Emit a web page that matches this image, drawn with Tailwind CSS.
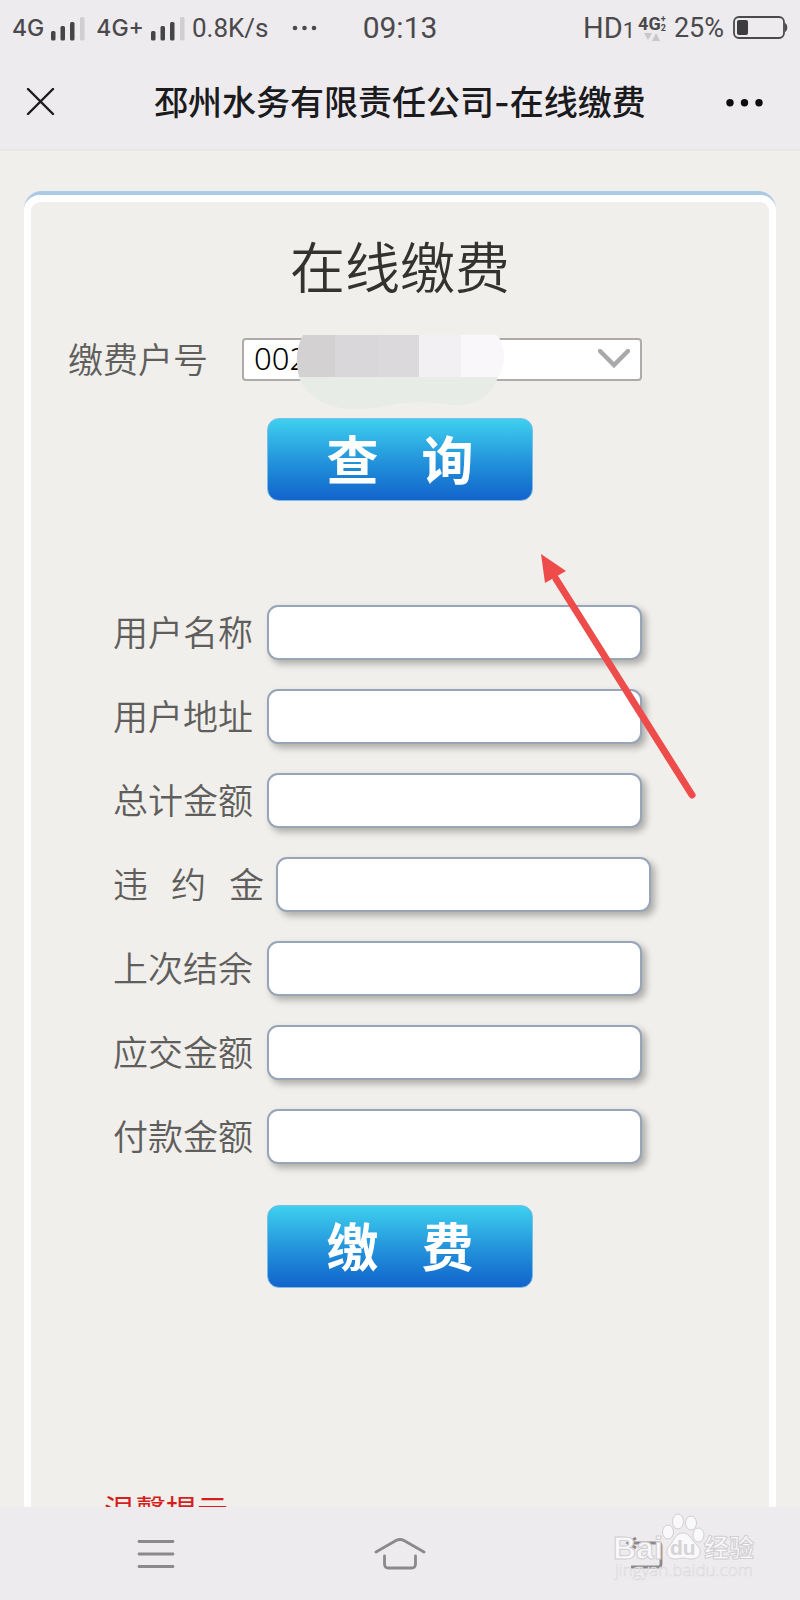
<!DOCTYPE html>
<html lang="zh-CN">
<head>
<meta charset="utf-8">
<meta name="viewport" content="width=device-width, initial-scale=1">
<title>邳州水务有限责任公司-在线缴费</title>
<script src="https://cdn.jsdelivr.net/npm/@tailwindcss/browser@4"></script>
</head>
<body class="relative flex h-screen flex-col overflow-hidden bg-[#f0efeb] font-['Noto_Sans_CJK_SC',sans-serif] font-[350] text-[#5f5e5c]">

<header class="shrink-0 border-b-2 border-[#e8e6e6] bg-[#edebee]">
  <div class="grid h-[56px] grid-cols-[1fr_auto_1fr] items-center px-[12px] font-[Roboto,sans-serif] text-[26px] leading-none font-normal text-[#4a494c]">
    <div class="flex items-center">
      <span class="font-[Inter,sans-serif] text-[23px] font-medium">4G</span>
      <svg class="ml-[7px] shrink-0" width="34" height="25" viewBox="0 0 34 25"><g fill="#454447"><rect x="0" y="15" width="4.500" height="9.500" rx="1.500"/><rect x="9.500" y="10" width="4.500" height="14.500" rx="1.500"/><rect x="19" y="6" width="4.500" height="18.500" rx="1.500"/></g><rect x="29" y="1" width="4.500" height="23.500" rx="1.500" fill="#d0ced1"/></svg>
      <span class="ml-[11px] font-[Inter,sans-serif] text-[23px] font-medium">4G+</span>
      <svg class="ml-[7px] shrink-0" width="34" height="25" viewBox="0 0 34 25"><g fill="#454447"><rect x="0" y="15" width="4.500" height="9.500" rx="1.500"/><rect x="9.500" y="10" width="4.500" height="14.500" rx="1.500"/><rect x="19" y="6" width="4.500" height="18.500" rx="1.500"/></g><rect x="29" y="1" width="4.500" height="23.500" rx="1.500" fill="#d0ced1"/></svg>
      <span class="ml-[7px]">0.8K/s</span>
      <svg class="ml-6 shrink-0" width="25" height="6" viewBox="0 0 25 6" fill="#4a494c"><circle cx="3" cy="3" r="2.300"/><circle cx="12.500" cy="3" r="2.300"/><circle cx="22" cy="3" r="2.300"/></svg>
    </div>
    <time class="text-[30px]">09:13</time>
    <div class="flex items-center justify-end">
      <span class="text-[29px]">HD<span class="text-[22px]">1</span></span>
      <span class="ml-[3px] flex flex-col items-center">
        <span class="flex text-[18px] leading-[18px] font-bold">4G<span class="flex flex-col text-[9px] leading-[9px]"><span>+</span><span>2</span></span></span>
        <svg width="16" height="8" viewBox="0 0 16 8" fill="#c9c7ca"><path d="M0 0h8L4 7zM8 8h8l-4-8z"/></svg>
      </span>
      <span class="ml-2 text-[27px]">25%</span>
      <svg class="ml-[9px] shrink-0" width="55" height="24" viewBox="0 0 55 24"><rect x="1" y="1" width="50" height="21" rx="5" fill="none" stroke="#4a494c" stroke-width="1.800"/><rect x="4" y="4" width="11" height="15" rx="2" fill="#3d3d3d"/><path d="M52 7c3 1 3 8 0 9z" fill="#4a494c"/></svg>
    </div>
  </div>
  <div class="grid h-[93px] grid-cols-[1fr_auto_1fr] items-center px-[26px] text-[#1b1a1c]">
    <button type="button" aria-label="关闭" class="justify-self-start"><svg width="29" height="29" viewBox="0 0 29 29" stroke="#1b1a1c" stroke-width="2.400" stroke-linecap="round"><path d="M2 1l25 25M27 1L2 26"/></svg></button>
    <h1 class="font-[Inter,'Noto_Sans_CJK_SC',sans-serif] text-[34px] leading-[48px] font-medium">邳州水务有限责任公司-在线缴费</h1>
    <button type="button" aria-label="更多" class="mr-[11px] justify-self-end"><svg width="37" height="8" viewBox="0 0 37 8" fill="#0d0c0e"><circle cx="4" cy="3.700" r="3.700"/><circle cx="18.500" cy="3.700" r="3.700"/><circle cx="33" cy="3.700" r="3.700"/></svg></button>
  </div>
</header>

<main class="min-h-0 flex-1 overflow-hidden px-6 pt-10">
  <div class="h-[1800px] rounded-t-[18px] border-t-4 border-[#abcae6]">
    <form class="h-full rounded-t-[16px] border-[7px] border-white pt-6">
      <h2 class="text-center text-[55px] leading-[76px] text-[#333231]">在线缴费</h2>
      <div class="mt-9 flex items-center pl-[37px]">
        <label for="account" class="w-[174px] pb-1 text-[35px] leading-[39px]">缴费户号</label>
        <div class="relative">
          <select id="account" class="block h-[43px] w-[400px] appearance-none rounded-[4px] border-2 border-[#adabab] bg-white px-[10px] pb-1 font-['Noto_Sans',sans-serif] text-[31px] leading-[34px] font-light text-black"><option>002</option></select>
          <svg class="pointer-events-none absolute top-[11px] right-[12px]" width="32" height="20" viewBox="0 0 32 20" fill="none" stroke="#a9a8aa" stroke-width="4.500"><path d="M2 2l14 14L30 2" stroke-linecap="round"/></svg>
          <svg class="pointer-events-none absolute -top-[3px] left-[54px]" width="209" height="74" viewBox="0 0 209 74">
            <defs><clipPath id="pill"><path d="M7 0H201Q208 8 208 22Q208 34 202 42H3Q-3 18 7 0z"/></clipPath></defs>
            <path d="M3 42H202C196 60 182 70 160 70C140 69 132 66 110 68C90 70 82 74 60 74C30 74 10 62 3 42z" fill="#e7ece6"/>
            <g clip-path="url(#pill)"><path fill="#d3d1d2" d="M0 0h39v42H0z"/><path fill="#d9d7da" d="M39 0h43v42H39z"/><path fill="#dbd9dc" d="M82 0h41v42H82z"/><path fill="#f2f0f3" d="M123 0h42v42h-42z"/><path fill="#f9f7fa" d="M165 0h44v42h-44z"/></g>
          </svg>
        </div>
      </div>
      <div class="mt-[37px] flex justify-center">
        <button type="button" class="flex h-[83px] w-[266px] items-center justify-center gap-[43px] rounded-[12px] border border-[#7bbde6] bg-linear-to-b from-[#3fd0ee] via-[#2596dc] to-[#1463cb] pb-1 text-[52px] leading-none font-bold text-white"><span>查</span><span>询</span></button>
      </div>

      <div class="mt-[104px] flex flex-col gap-[29px] pl-[82px] text-[35px] leading-[51px]">
        <div class="flex gap-[13px]"><label for="f1" class="w-[141px]">用户名称</label><input id="f1" class="h-[55px] w-[375px] rounded-[11px] border-2 border-[#98a4b8] bg-white shadow-[4px_4px_7px_#00000048]"></div>
        <div class="flex gap-[13px]"><label for="f2" class="w-[141px]">用户地址</label><input id="f2" class="h-[55px] w-[375px] rounded-[11px] border-2 border-[#98a4b8] bg-white shadow-[4px_4px_7px_#00000048]"></div>
        <div class="flex gap-[13px]"><label for="f3" class="w-[141px]">总计金额</label><input id="f3" class="h-[55px] w-[375px] rounded-[11px] border-2 border-[#98a4b8] bg-white shadow-[4px_4px_7px_#00000048]"></div>
        <div class="flex gap-[13px]"><label for="f4" class="flex w-[150px] gap-[23px]"><span>违</span><span>约</span><span>金</span></label><input id="f4" class="h-[55px] w-[375px] rounded-[11px] border-2 border-[#98a4b8] bg-white shadow-[4px_4px_7px_#00000048]"></div>
        <div class="flex gap-[13px]"><label for="f5" class="w-[141px]">上次结余</label><input id="f5" class="h-[55px] w-[375px] rounded-[11px] border-2 border-[#98a4b8] bg-white shadow-[4px_4px_7px_#00000048]"></div>
        <div class="flex gap-[13px]"><label for="f6" class="w-[141px]">应交金额</label><input id="f6" class="h-[55px] w-[375px] rounded-[11px] border-2 border-[#98a4b8] bg-white shadow-[4px_4px_7px_#00000048]"></div>
        <div class="flex gap-[13px]"><label for="f7" class="w-[141px]">付款金额</label><input id="f7" class="h-[55px] w-[375px] rounded-[11px] border-2 border-[#98a4b8] bg-white shadow-[4px_4px_7px_#00000048]"></div>
      </div>
      <div class="mt-[41px] flex justify-center">
        <button type="submit" class="flex h-[83px] w-[266px] items-center justify-center gap-[43px] rounded-[12px] border border-[#7bbde6] bg-linear-to-b from-[#3fd0ee] via-[#2596dc] to-[#1463cb] pb-1 text-[52px] leading-none font-bold text-white"><span>缴</span><span>费</span></button>
      </div>
      <p class="mt-[198px] pl-[73px] text-[31px] leading-[46px] font-normal text-[#d51f1f]">温馨提示</p>
    </form>
  </div>
</main>

<nav class="grid h-[93px] shrink-0 grid-cols-3 items-center justify-items-center bg-[#edebee] px-[34px]">
  <button type="button" aria-label="菜单"><svg width="38" height="30" viewBox="0 0 38 30" stroke="#8b898c" stroke-width="2.800" stroke-linecap="round"><path d="M2 2.500h34M2 15h34M2 27.500h34"/></svg></button>
  <button type="button" aria-label="主页"><svg width="54" height="34" viewBox="0 0 54 34" fill="none" stroke="#8b898c" stroke-width="2.800" stroke-linecap="round" stroke-linejoin="round"><path d="M3 15L23 3.500Q27 1.500 31 3.500L51 15M11.500 19v8q0 4 4 4h23q4 0 4-4v-8"/></svg></button>
  <button type="button" aria-label="返回"><svg width="38" height="34" viewBox="0 0 38 34" fill="none" stroke="#8b898c" stroke-width="2.800"><path d="M2 6h31q3 0 3 3v18q0 3-3 3H6M11 1L3 6l8 5"/></svg></button>
</nav>

<svg class="pointer-events-none absolute top-[553px] left-[540px]" width="158" height="248" viewBox="0 0 158 248"><path d="M16 26L152 242" stroke="#ee4b4b" stroke-width="7" stroke-linecap="round"/><path d="M1 1l25 17L5 30z" fill="#ee4b4b"/></svg>

<div class="pointer-events-none absolute right-[40px] bottom-[16px] font-['Open_Sans','Noto_Sans_CJK_SC',sans-serif]">
  <svg width="148" height="72" viewBox="0 0 148 72">
    <g fill="#f9f8fa" stroke="#d0ced1" stroke-width="1">
      <text x="1" y="47" font-size="32" font-weight="700" font-family="Liberation Sans">Bai</text>
      <ellipse cx="56" cy="20" rx="5.500" ry="7"/><ellipse cx="66" cy="9.500" rx="5.500" ry="7.500"/><ellipse cx="79" cy="11" rx="5.500" ry="7"/><ellipse cx="86.500" cy="23" rx="5.500" ry="7"/>
      <path d="M71 21c-8 0-9 8-13 12c-6 6-3 14 5 14c4 0 5-1 8-1s4 1 9 1c8 0 11-8 5-14c-5-4-7-12-14-12z"/>
      <text x="92" y="45" font-size="25" font-weight="700">经验</text>
    </g>
    <text x="58" y="43" font-size="21" font-weight="700" fill="#d5d3d6" font-family="Liberation Sans">du</text>
    <text x="3" y="64" font-size="17" fill="#fbfafc" stroke="#d8d6d9" stroke-width=".5">jingyan.baidu.com</text>
  </svg>
</div>
</body>
</html>
